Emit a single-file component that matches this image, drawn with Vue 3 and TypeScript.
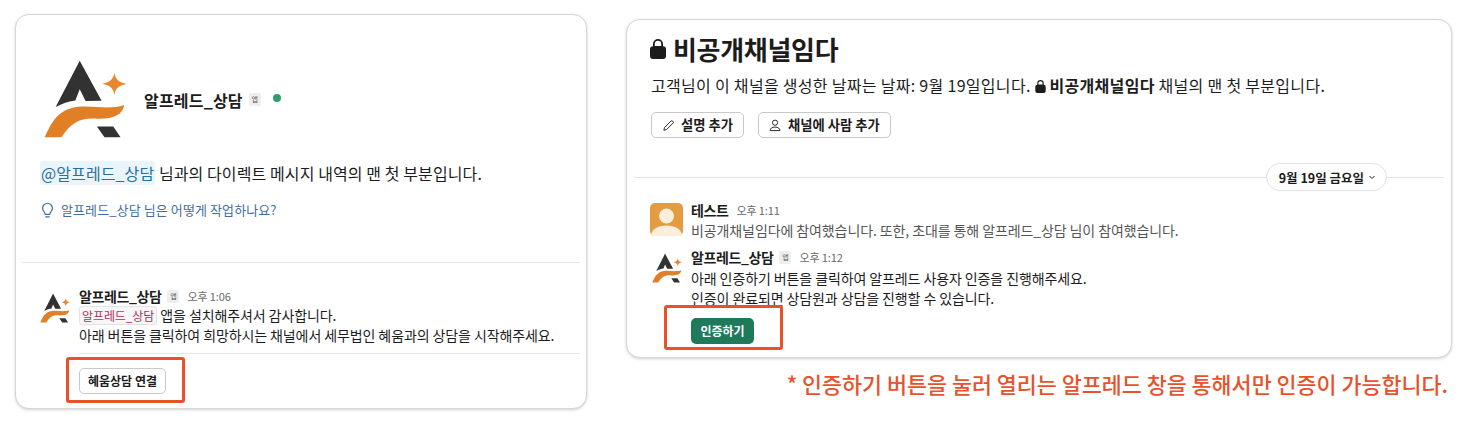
<script setup lang="ts">
const botName = '알프레드_상담'
const channelName = '비공개채널임다'
</script>

<template>
  <main class="page">
    <svg class="defs" width="0" height="0" aria-hidden="true">
      <defs>
        <symbol id="logo" viewBox="60 25 225 245" preserveAspectRatio="none">
          <path fill="#333233" d="M158 30 L92 172 C112 160 130 154 146 152 L158 118 L174 154 L218 153 Z" />
          <path fill="#e07f26" d="M62 265 C82 215 100 180 150 172 C190 166 240 182 280 166 C276 196 250 210 205 208 C160 205 135 218 108 265 Z" />
          <path fill="#333233" d="M205 232 L250 232 L270 265 L226 265 Z" />
          <path fill="#e9872c" d="M253 68 C257 88 264 96 286 101 C264 106 257 114 253 134 C249 114 242 106 220 101 C242 96 249 88 253 68 Z" />
        </symbol>
      </defs>
    </svg>

    <section class="card card-dm">
      <div class="dm-intro">
        <div class="dm-head">
          <svg class="logo-big"><use href="#logo" /></svg>
          <strong class="dm-name">{{ botName }}</strong>
          <span class="app-badge">앱</span>
          <span class="presence"></span>
        </div>
        <p class="dm-line">
          <span class="mention">@{{ botName }}</span> 님과의 다이렉트 메시지 내역의 맨 첫 부분입니다.
        </p>
        <p class="dm-hint">
          <svg class="bulb" viewBox="0 0 14 18" fill="none" stroke="#3f6f9f" stroke-width="1.3">
            <path d="M7 1.2a5.3 5.3 0 0 0-5.3 5.3c0 2.6 2.2 3.9 2.9 6.6h4.8c.7-2.7 2.9-4 2.9-6.6A5.3 5.3 0 0 0 7 1.2Z" />
            <path d="M5 15.8h4" stroke-linecap="round" />
          </svg>
          {{ botName }} 님은 어떻게 작업하나요?
        </p>
      </div>

      <div class="rule"></div>

      <div class="msg msg-dm">
        <svg class="logo-small"><use href="#logo" /></svg>
        <div class="msg-body">
          <div class="msg-meta">
            <strong>{{ botName }}</strong>
            <span class="app-badge">앱</span>
            <span class="time">오후 1:06</span>
          </div>
          <p class="tight"><code class="chip">{{ botName }}</code> 앱을 설치해주셔서 감사합니다.</p>
          <p class="tight">아래 버튼을 클릭하여 희망하시는 채널에서 세무법인 혜움과의 상담을 시작해주세요.</p>
          <div class="msg-rule"></div>
          <div class="marked marked-dm">
            <button type="button" class="btn">혜움상담 연결</button>
          </div>
        </div>
      </div>
    </section>

    <div class="side">
      <section class="card card-channel">
        <div class="ch-intro">
          <h1 class="ch-title">
            <svg class="lock-big" viewBox="0 0 16 20"><path fill="#1d1c1d" d="M8 0a5 5 0 0 0-5 5v2.2A3 3 0 0 0 0 10.2V17a3 3 0 0 0 3 3h10a3 3 0 0 0 3-3v-6.800a3 3 0 0 0-3-3V5a5 5 0 0 0-5-5Zm3.200 7H4.800V5a3.200 3.200 0 0 1 6.400 0Z" /></svg>
            {{ channelName }}
          </h1>
          <p class="ch-line">
            고객님이 이 채널을 생성한 날짜는 날짜: 9월 19일입니다.
            <svg class="lock-small" viewBox="0 0 16 20"><path fill="#1d1c1d" d="M8 0a5 5 0 0 0-5 5v2.2A3 3 0 0 0 0 10.2V17a3 3 0 0 0 3 3h10a3 3 0 0 0 3-3v-6.800a3 3 0 0 0-3-3V5a5 5 0 0 0-5-5Zm3.200 7H4.800V5a3.200 3.200 0 0 1 6.400 0Z" /></svg>
            <strong>{{ channelName }}</strong> 채널의 맨 첫 부분입니다.
          </p>
          <div class="ch-actions">
            <button type="button" class="btn btn-icon">
              <svg viewBox="0 0 14 14" fill="none" stroke="#1d1c1d" stroke-width="1"><path d="M2 12.200l.7-3L9.600 2.300a1.300 1.300 0 0 1 1.900 0l.3.300a1.300 1.300 0 0 1 0 1.900L4.900 11.400Z" /></svg>
              설명 추가
            </button>
            <button type="button" class="btn btn-icon">
              <svg viewBox="0 0 14 14" fill="none" stroke="#1d1c1d" stroke-width="1"><circle cx="6.500" cy="4" r="2.800" /><path d="M1.200 12.500c0-2.500 2.200-3.800 5.300-3.800 3.100 0 5.300 1.300 5.300 3.800Z" /></svg>
              채널에 사람 추가
            </button>
          </div>
        </div>

        <div class="date-row">
          <span class="date-pill">9월 19일 금요일
            <svg viewBox="0 0 8 8" fill="none" stroke="#1d1c1d" stroke-width="1"><path d="M1.500 3l2.500 2.500L6.500 3" /></svg>
          </span>
        </div>

        <div class="msg msg-join">
          <svg class="avatar" viewBox="0 0 33 33">
            <rect width="33" height="33" rx="5" fill="#e59b3f" />
            <circle cx="16.500" cy="13" r="7.500" fill="#fbeedb" />
            <path d="M1 33c0-7 7-10.500 15.500-10.500S32 26 32 33Z" fill="#fbeedb" />
          </svg>
          <div class="msg-body">
            <div class="msg-meta">
              <strong>테스트</strong>
              <span class="time">오후 1:11</span>
            </div>
            <p class="muted">{{ channelName }}에 참여했습니다. 또한, 초대를 통해 {{ botName }} 님이 참여했습니다.</p>
          </div>
        </div>

        <div class="msg msg-auth">
          <svg class="logo-small"><use href="#logo" /></svg>
          <div class="msg-body">
            <div class="msg-meta">
              <strong>{{ botName }}</strong>
              <span class="app-badge">앱</span>
              <span class="time">오후 1:12</span>
            </div>
            <p class="first">아래 인증하기 버튼을 클릭하여 알프레드 사용자 인증을 진행해주세요.</p>
            <p>인증이 완료되면 상담원과 상담을 진행할 수 있습니다.</p>
            <div class="marked marked-auth">
              <button type="button" class="btn btn-green">인증하기</button>
            </div>
          </div>
        </div>
      </section>

      <p class="note">* 인증하기 버튼을 눌러 열리는 알프레드 창을 통해서만 인증이 가능합니다.</p>
    </div>
  </main>
</template>

<style>
html,
body {
  margin: 0;
  background: #ffffff;
}
</style>

<style scoped>
.page {
  display: flex;
  align-items: flex-start;
  gap: 39px;
  width: 1475px;
  height: 430px;
  box-sizing: border-box;
  padding: 14px 23px 0 15px;
  overflow: hidden;
  font-family: "Noto Sans CJK KR", "Noto Sans", sans-serif;
  color: #1d1c1d;
}

.defs {
  position: absolute;
}

p {
  margin: 0;
}

.card {
  box-sizing: border-box;
  background: #ffffff;
  border: 1px solid #d6d6d6;
  border-radius: 14px;
  box-shadow: 0 1px 3px rgba(0, 0, 0, 0.18);
}

.card-dm {
  width: 572px;
  height: 395px;
  padding: 0 6px;
  flex: none;
}

.dm-intro {
  padding: 44px 0 0 18px;
  height: 203px;
  box-sizing: border-box;
}

.dm-head {
  display: flex;
  align-items: center;
  gap: 6px;
}

.logo-big {
  width: 82px;
  height: 80px;
  margin: 0 12px 0 4px;
}

.dm-name {
  font-size: 16px;
  font-weight: 700;
  letter-spacing: 0.2px;
  margin-top: 2px;
}

.presence {
  width: 8px;
  height: 8px;
  border-radius: 50%;
  background: #2f9e6e;
  margin: -2px 0 0 6px;
}

.app-badge {
  display: inline-block;
  width: 12px;
  height: 13px;
  line-height: 13px;
  border-radius: 2px;
  background: #eeeeee;
  color: #555555;
  font-size: 7px;
  text-align: center;
}

.dm-line {
  margin-top: 23px;
  font-size: 16px;
  line-height: 22px;
  letter-spacing: 0.1px;
}

.mention {
  padding: 0 1px;
  border-radius: 3px;
  background: #e8f5fa;
  color: #2a6f9e;
}

.dm-hint {
  display: flex;
  align-items: center;
  gap: 7px;
  margin-top: 17px;
  font-size: 13px;
  line-height: 18px;
  letter-spacing: 0.1px;
  color: #3f6f9f;
}

.bulb {
  width: 13px;
  height: 17px;
  margin-left: 1px;
}

.rule {
  height: 1px;
  background: #e6e6e6;
  margin: 44px 0 0;
}

.msg {
  display: flex;
}

.msg-body {
  flex: 1;
  min-width: 0;
  font-size: 14px;
  line-height: 20px;
  letter-spacing: -0.1px;
}

.msg-meta {
  display: flex;
  align-items: center;
  gap: 6px;
  height: 20px;
}

.msg-meta strong {
  font-weight: 700;
  letter-spacing: -0.4px;
}

.time {
  margin-left: 2px;
  font-size: 11px;
  color: #696969;
}

.msg-dm {
  padding: 23px 0 0 18px;
}

.logo-small {
  flex: none;
  width: 30px;
  height: 30px;
  margin: 7px 9px 0 0;
}

.tight {
  margin-top: -1px;
}

.tight + .tight {
  margin-top: 0;
  line-height: 19px;
}

.chip {
  padding: 0 2px;
  border: 1px solid #e3e3e3;
  border-radius: 3px;
  background: #f7f7f7;
  color: #b0305c;
  font-family: inherit;
  font-size: 12px;
}

.msg-rule {
  height: 1px;
  margin-top: 8px;
  background: #e8e8e8;
}

.marked {
  position: relative;
  width: fit-content;
}

.marked::after {
  content: "";
  position: absolute;
  border: 3px solid #e8522b;
  border-radius: 3px;
  pointer-events: none;
}

.marked-dm {
  margin-top: 14px;
}

.marked-dm::after {
  inset: -11px -19px -9px -13px;
}

.marked-auth {
  margin-top: 10px;
}

.marked-auth::after {
  inset: -13px -29px -6px -27px;
}

.btn {
  display: block;
  height: 26px;
  padding: 0 8px;
  box-sizing: border-box;
  border: 1px solid #c9c9c9;
  border-radius: 5px;
  background: #ffffff;
  color: #1d1c1d;
  font-family: inherit;
  font-size: 12px;
  font-weight: 700;
  line-height: 1;
}

.btn-green {
  padding: 0 9.500px;
  border: 0;
  background: #1f7a5c;
  color: #ffffff;
}

.side {
  flex: 1;
  min-width: 0;
  margin-top: 5px;
}

.card-channel {
  height: 339px;
  padding: 0 7px;
}

.ch-intro {
  padding: 0 0 0 17px;
}

.ch-title {
  display: flex;
  align-items: center;
  gap: 7px;
  margin: 14px 0 0 -1px;
  font-size: 26px;
  font-weight: 700;
  line-height: 30px;
  letter-spacing: -0.3px;
}

.lock-big {
  width: 16px;
  height: 20px;
}

.ch-line {
  margin-top: 10px;
  font-size: 16px;
  line-height: 22px;
  letter-spacing: 0.3px;
}

.ch-line strong {
  font-weight: 700;
}

.lock-small {
  width: 11px;
  height: 13px;
  margin: 0 4px 0 0;
  vertical-align: -1px;
}

.ch-actions {
  display: flex;
  gap: 14px;
  margin-top: 16px;
}

.btn-icon {
  display: flex;
  align-items: center;
  gap: 6px;
  padding: 0 10px;
  font-size: 13.300px;
}

.btn-icon svg {
  width: 13px;
  height: 13px;
}

.date-row {
  position: relative;
  display: flex;
  justify-content: flex-end;
  margin-top: 25px;
  padding-right: 57px;
}

.date-row::before {
  content: "";
  position: absolute;
  left: 0;
  right: 0;
  top: 14px;
  height: 1px;
  background: #e2e2e2;
}

.date-pill {
  position: relative;
  display: flex;
  align-items: center;
  gap: 4px;
  height: 28px;
  padding: 0 10px 0 12px;
  box-sizing: border-box;
  border: 1px solid #e2e2e2;
  border-radius: 14px;
  background: #ffffff;
  font-size: 12.500px;
  font-weight: 700;
}

.date-pill svg {
  width: 8px;
  height: 8px;
}

.msg-join {
  margin-top: 12px;
  padding-left: 16px;
}

.msg-join .msg-body {
  margin-top: -3px;
}

.avatar {
  flex: none;
  width: 33px;
  height: 33px;
  margin-right: 8px;
}

.muted {
  color: #555555;
}

.msg-auth {
  margin-top: 7px;
  padding-left: 18px;
}

.msg-auth .logo-small {
  margin-top: 6px;
}

.first {
  margin-top: 1px;
}

.note {
  margin-top: 13px;
  padding-right: 4px;
  font-size: 21.750px;
  font-weight: 500;
  line-height: 26px;
  text-align: right;
  color: #e8522b;
  white-space: nowrap;
}
</style>
